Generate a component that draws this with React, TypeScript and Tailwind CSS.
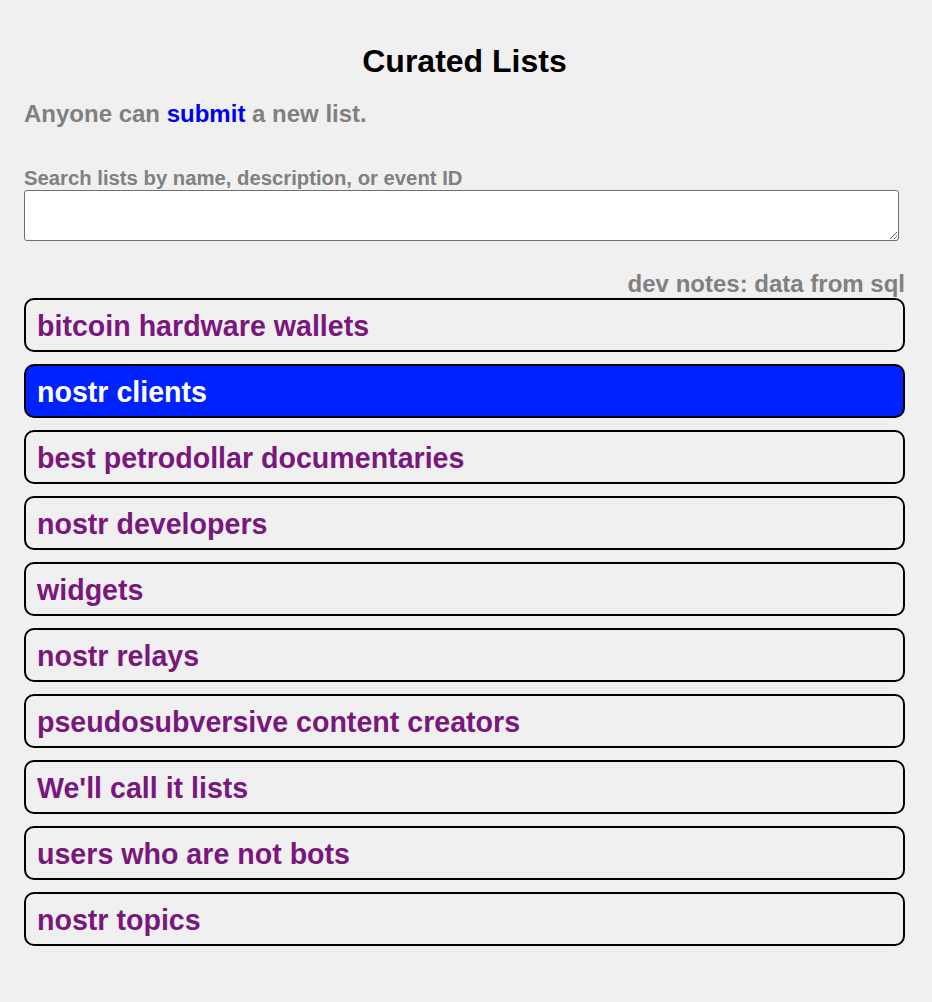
import React from 'react';

const lists = [
  'bitcoin hardware wallets',
  'nostr clients',
  'best petrodollar documentaries',
  'nostr developers',
  'widgets',
  'nostr relays',
  'pseudosubversive content creators',
  "We'll call it lists",
  'users who are not bots',
  'nostr topics',
];

const App: React.FC = () => {
  const selected = 1;

  return (
    <div className="min-h-[1002px] bg-[#f0f0f0] font-['Liberation_Sans',Arial,sans-serif] font-bold">
      <div className="pl-6 pr-[27px] pt-[42px]">
        <h1 className="text-center text-[32px] leading-[38px] text-black">Curated Lists</h1>
        <p className="mt-[20px] text-[24px] leading-[28px] text-[#808080]">
          Anyone can <a href="#" className="text-[#0000ee]">submit</a> a new list.
        </p>

        <label className="mt-[39px] block text-[20.3px] leading-[23px] text-[#808080]">
          Search lists by name, description, or event ID
        </label>
        <textarea className="block h-[51px] w-[875px] rounded-[3px] border border-[#6f6f6f] bg-white" />

        <div className="mt-[29px] text-right text-[24px] leading-[28px] text-[#808080]">
          dev notes: data from sql
        </div>

        <div className="flex flex-col gap-3">
          {lists.map((name, i) => (
            <div
              key={i}
              className={
                i === selected
                  ? 'flex h-[54px] items-center rounded-[10px] border-2 border-black bg-[#0022ff] pl-[11px] pt-[2px] text-[28.6px] text-white'
                  : 'flex h-[54px] items-center rounded-[10px] border-2 border-black pl-[11px] pt-[2px] text-[28.6px] text-[#7a177d]'
              }
            >
              {name}
            </div>
          ))}
        </div>
      </div>
    </div>
  );
};

export default App;
